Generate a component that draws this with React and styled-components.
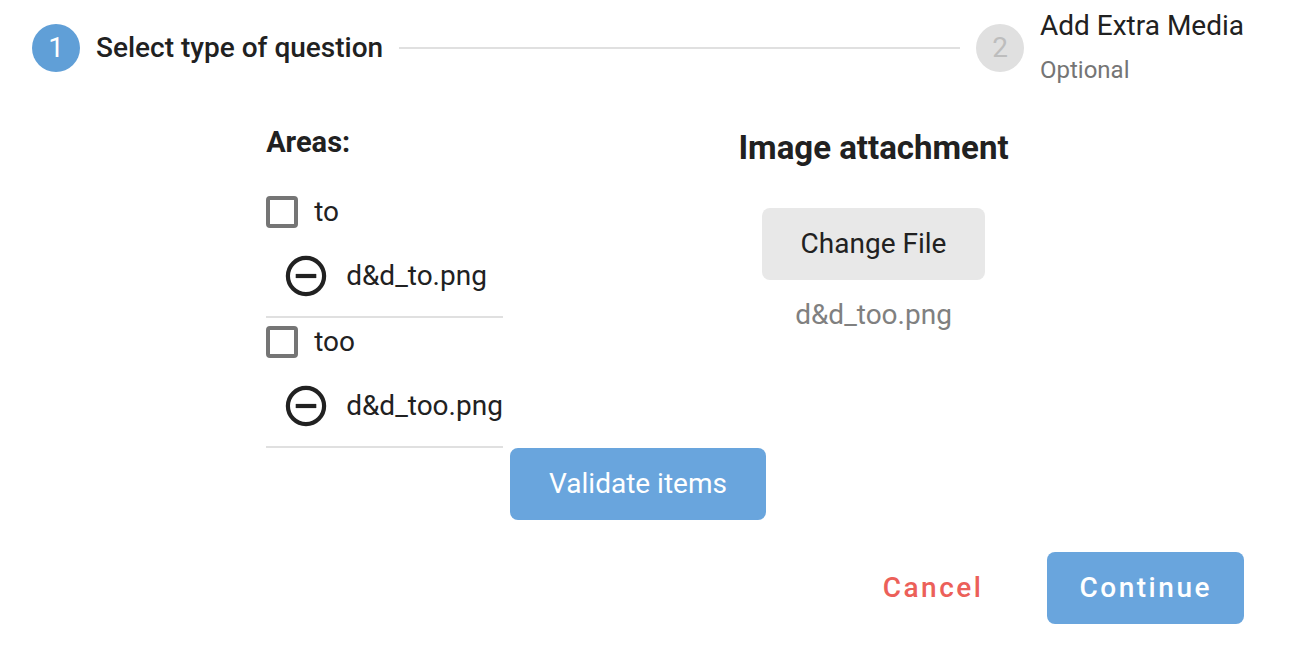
import React from "react";
import styled, { createGlobalStyle } from "styled-components";

const Global = createGlobalStyle`
  *, *::before, *::after { box-sizing: border-box; }
  body { margin: 0; background: #fff; color: #212121; font-family: Roboto, "Liberation Sans", sans-serif; font-size: 28px; line-height: 32px; }
  h2, h3, p, ul, ol { margin: 0; padding: 0; }
  ul, ol { list-style: none; }
`;
const Page = styled.form`display: flex; flex-direction: column; padding: 0 48px 22px 32px;`;
const Stepper = styled.ol`display: flex; align-items: center; gap: 16px; height: 96px;`;
const Step = styled.li`display: flex; align-items: center; gap: 16px; white-space: nowrap; font-weight: ${p => p.$active ? 500 : 400};`;
const StepNumber = styled.span`
  display: grid; place-items: center; width: 48px; height: 48px; border-radius: 50%; font-weight: 400;
  background: ${p => p.$active ? "#609fd7" : "#e0e0e0"}; color: ${p => p.$active ? "#fff" : "#bdbdbd"};
`;
const StepText = styled.span`display: flex; flex-direction: column; gap: 12px;`;
const Hint = styled.small`font-size: 24px; color: #757575;`;
const StepLine = styled.li`flex: 1; height: 2px; background: #e0e0e0;`;
const Columns = styled.div`display: grid; grid-template-columns: 1fr 1fr; padding: 0 126px 0 108px;`;
const Areas = styled.section`justify-self: center; padding-top: 30px;`;
const AreasTitle = styled.h3`font-size: 29px; line-height: 32px; font-weight: 700; margin-bottom: 30px;`;
const Area = styled.li`height: 130px; padding-top: 8px; border-bottom: 2px solid #e0e0e0;`;
const AreaLabel = styled.label`display: flex; align-items: center; gap: 16px;`;
const Checkbox = styled.input`appearance: none; width: 32px; height: 32px; margin: 0; border: 4px solid #757575; border-radius: 4px; &:checked { background: #609fd7; }`;
const FileRow = styled.div`display: flex; align-items: center; gap: 16px; margin: 24px 0 0 16px;`;
const IconButton = styled.button`display: flex; padding: 0; border: 0; background: none; color: inherit; cursor: pointer;`;
const Attachment = styled.section`display: flex; flex-direction: column; align-items: center; padding-top: 32px;`;
const AttachmentTitle = styled.h2`font-size: 33px; line-height: 40px; font-weight: 700; margin-bottom: 40px;`;
const FileName = styled.p`margin-top: 19px; color: #808080;`;
const Button = styled.button`
  height: 72px; padding: 0 ${p => p.$wide ? 32 : 39}px; border: 0; border-radius: 8px; font: inherit; cursor: pointer;
  font-weight: ${p => p.$wide ? 500 : 400}; letter-spacing: ${p => p.$wide ? "0.09em" : "normal"};
  background: ${p => p.$kind === "primary" ? "#69a5dd" : p.$kind === "neutral" ? "#e8e8e8" : "transparent"};
  color: ${p => p.$kind === "primary" ? "#fff" : p.$kind === "danger" ? "#ec6059" : "inherit"};
`;
const Validate = styled.div`display: flex; justify-content: center;`;
const Actions = styled.div`display: flex; justify-content: flex-end; gap: 32px; margin-top: 32px;`;

const RemoveIcon = () => (
  <svg width="48" height="48" viewBox="0 0 48 48" fill="none" stroke="currentColor" strokeWidth="4.2" aria-hidden="true">
    <circle cx="24" cy="24" r="18.1" />
    <path d="M13.7 24h20.6" />
  </svg>
);
const areas = [{ name: "to", file: "d&d_to.png" }, { name: "too", file: "d&d_too.png" }];

export default function App() {
  return (
    <Page onSubmit={e => e.preventDefault()}>
      <Global />
      <Stepper>
        <Step $active><StepNumber $active>1</StepNumber>Select type of question</Step>
        <StepLine aria-hidden="true" />
        <Step><StepNumber>2</StepNumber><StepText>Add Extra Media<Hint>Optional</Hint></StepText></Step>
      </Stepper>
      <Columns>
        <Areas>
          <AreasTitle>Areas:</AreasTitle>
          <ul>
            {areas.map(a => (
              <Area key={a.name}>
                <AreaLabel><Checkbox type="checkbox" />{a.name}</AreaLabel>
                <FileRow><IconButton type="button" aria-label={`Remove ${a.file}`}><RemoveIcon /></IconButton>{a.file}</FileRow>
              </Area>
            ))}
          </ul>
        </Areas>
        <Attachment>
          <AttachmentTitle>Image attachment</AttachmentTitle>
          <Button type="button" $kind="neutral">Change File</Button>
          <FileName>d&amp;d_too.png</FileName>
        </Attachment>
      </Columns>
      <Validate><Button type="button" $kind="primary">Validate items</Button></Validate>
      <Actions>
        <Button type="button" $kind="danger" $wide>Cancel</Button>
        <Button type="submit" $kind="primary" $wide>Continue</Button>
      </Actions>
    </Page>
  );
}
